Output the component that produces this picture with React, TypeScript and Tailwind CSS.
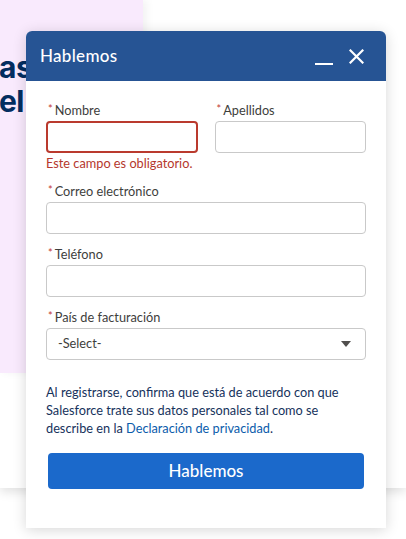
const Label = ({ text }: { text: string }) => (
    <label className="flex items-start h-[21px] pt-[1px] text-[12.75px] text-[#3e3e3c] leading-[18px]">
        <abbr className="no-underline text-[#c23934] text-[11px] mr-[2px] ml-[2px] -mt-[1px]">*</abbr>
        {text}
    </label>
);

const Input = ({ error }: { error?: boolean }) => (
    <input
        type="text"
        className={
            error
                ? "w-full h-[32px] rounded-[4px] border-2 border-[#ba3a2e] bg-white outline-none"
                : "w-full h-[32px] rounded-[4px] border border-[#c9c9c9] bg-white outline-none"
        }
    />
);

const App = () => {
    return (
        <div className="relative w-[406px] h-[539px] overflow-hidden bg-white font-['Lato','Noto_Sans',sans-serif]">
            {/* page behind the chat form */}
            <div className="h-[488px] bg-white shadow-[0_4px_10px_rgba(0,0,0,0.12)] flex">
                <div className="w-[143px] h-[373px] bg-[#f9eafd] shadow-[4px_0_8px_rgba(0,0,0,0.05)] pt-[50px]">
                    <p className="-ml-[1px] font-['Inter',sans-serif] font-bold text-[30px] leading-[34px] tracking-[-0.5px] text-[#032d60]">
                        as
                        <br />
                        el
                    </p>
                </div>
            </div>

            {/* chat form window */}
            <div className="absolute left-[26px] top-[31px] w-[360px] h-[497px] bg-white rounded-t-[6px] shadow-[0_2px_14px_rgba(0,0,0,0.16)] flex flex-col">
                <div className="h-[50px] bg-[#265494] rounded-t-[6px] flex items-center justify-between pl-[14px] pr-[22px]">
                    <h2 className="text-white text-[17px] font-medium tracking-[0.3px]">Hablemos</h2>
                    <div className="flex items-center gap-[16px]">
                        <svg width="18" height="18" viewBox="0 0 18 18" className="mt-[4px]">
                            <rect x="0" y="14" width="18" height="2" fill="#fff" />
                        </svg>
                        <svg width="15" height="15" viewBox="0 0 15 15">
                            <path d="M1.5 1.5 L13.5 13.5 M13.5 1.5 L1.5 13.5" stroke="#fff" strokeWidth="2.2" strokeLinecap="square" />
                        </svg>
                    </div>
                </div>

                <form className="px-[20px] pt-[19px] flex flex-col">
                    <div className="grid grid-cols-2 gap-x-[17px]">
                        <div>
                            <Label text="Nombre" />
                            <Input error />
                        </div>
                        <div>
                            <Label text="Apellidos" />
                            <Input />
                        </div>
                    </div>
                    <p className="mt-[2px] text-[12.75px] leading-[17px] text-[#b5372c]">Este campo es obligatorio.</p>

                    <div className="mt-[9px]">
                        <Label text="Correo electrónico" />
                        <Input />
                    </div>
                    <div className="mt-[10px]">
                        <Label text="Teléfono" />
                        <Input />
                    </div>
                    <div className="mt-[10px]">
                        <Label text="País de facturación" />
                        <div className="h-[32px] rounded-[4px] border border-[#c9c9c9] flex items-center justify-between pl-[11px] pr-[14px]">
                            <span className="text-[12.75px] text-[#3e3e3c]">-Select-</span>
                            <svg width="10" height="6" viewBox="0 0 10 6">
                                <path d="M0 0 H10 L5 6 Z" fill="#514f4d" />
                            </svg>
                        </div>
                    </div>

                    <p className="mt-[23px] pr-[8px] text-[12.75px] leading-[18px] text-[#16325c]">
                        Al registrarse, confirma que está de acuerdo con que Salesforce trate sus datos personales tal como se describe en la <span className="text-[#0b5cab]">Declaración de privacidad</span>.
                    </p>

                    <button
                        type="button"
                        className="mt-[16px] mx-[2px] h-[36px] rounded-[4px] bg-[#1b69cb] text-white text-[17px] font-medium"
                    >
                        Hablemos
                    </button>
                </form>
            </div>
        </div>
    );
};

export default App;
